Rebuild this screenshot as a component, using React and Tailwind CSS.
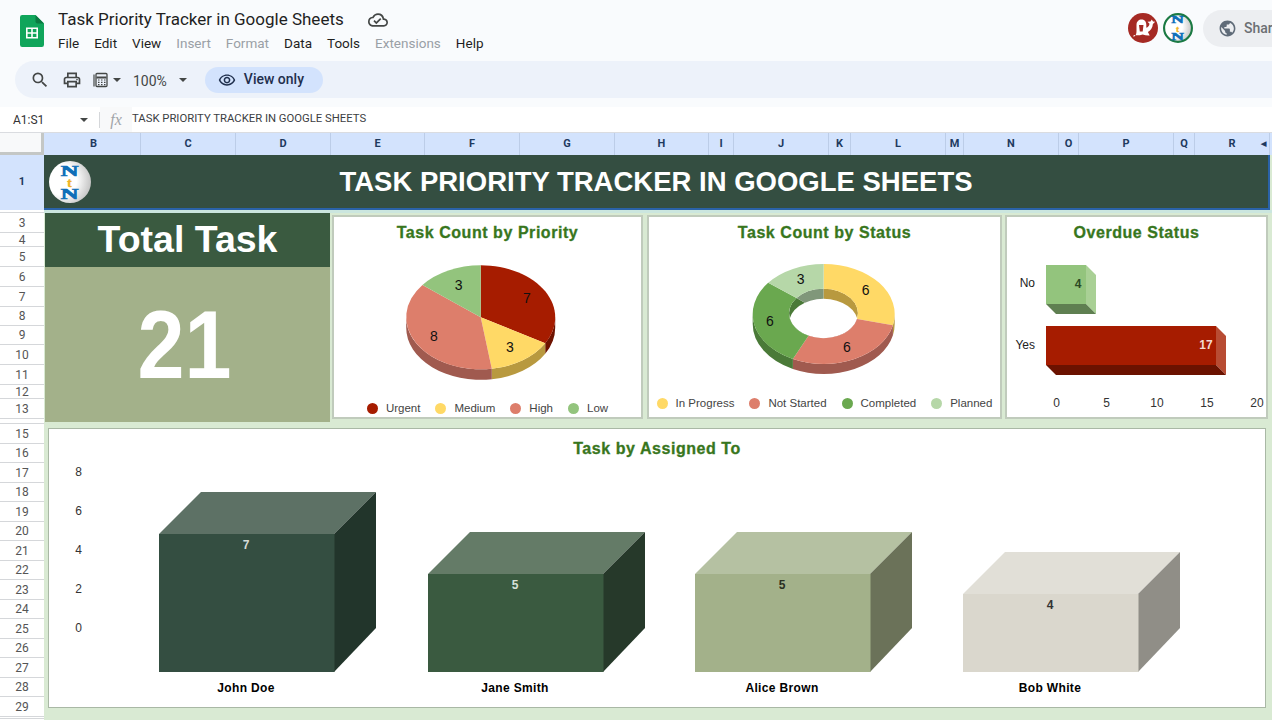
import React from 'react';
import { MdPublic, MdOutlineCloudDone, MdSearch, MdOutlinePrint, MdOutlineRemoveRedEye } from 'react-icons/md';

const COLS = ['', 'B', 'C', 'D', 'E', 'F', 'G', 'H', 'I', 'J', 'K', 'L', 'M', 'N', 'O', 'P', 'Q', 'R'];
const ROWS = ['1', '', '3', '4', '5', '6', '7', '8', '9', '10', '11', '12', '13', '', '15', '16', '17', '18', '19', '20', '21', '22', '23', '24', '25', '26', '27', '28', '29', ''];
const MENU = [['File', 0], ['Edit', 0], ['View', 0], ['Insert', 1], ['Format', 1], ['Data', 0], ['Tools', 0], ['Extensions', 1], ['Help', 0]];

const pt = (c, deg, dy = 0) => {
  const t = (deg * Math.PI) / 180;
  return [c.x + c.rx * Math.sin(t), c.y - c.ry * Math.cos(t) + dy];
};
const sector = (c, a, b) => {
  const p = pt(c, a), q = pt(c, b);
  return `M${c.x} ${c.y}L${p}A${c.rx} ${c.ry} 0 ${b - a > 180 ? 1 : 0} 1 ${q}Z`;
};
const wall = (c, a, b, d) => {
  const s = Math.max(a, 90), e = Math.min(b, 270);
  if (e <= s) return '';
  return `M${pt(c, s)}A${c.rx} ${c.ry} 0 0 1 ${pt(c, e)}L${pt(c, e, d)}A${c.rx} ${c.ry} 0 0 0 ${pt(c, s, d)}Z`;
};
const ring = (o, i, a, b) => {
  const l = b - a > 180 ? 1 : 0;
  return `M${pt(o, a)}A${o.rx} ${o.ry} 0 ${l} 1 ${pt(o, b)}L${pt(i, b)}A${i.rx} ${i.ry} 0 ${l} 0 ${pt(i, a)}Z`;
};

function NtnLogo({ className, ring: withRing }) {
  const id = withRing ? 'lgA' : 'lgB';
  return (
    <svg viewBox="0 0 42 42" className={className}>
      <defs>
        <radialGradient id={id} cx="0.3" cy="0.45" r="0.8">
          <stop offset="0.45" stopColor="#ffffff" />
          <stop offset="1" stopColor="#b4b4b4" />
        </radialGradient>
      </defs>
      <circle cx="21" cy="21" r={withRing ? 19.5 : 21} fill={`url(#${id})`} stroke={withRing ? '#1b7a43' : 'none'} strokeWidth={withRing ? 3 : 0} />
      <g fontFamily="'Liberation Serif',serif" fontWeight="700" textAnchor="middle">
        <text transform="translate(20.5 14.5) scale(1.75 1)" fontSize="14" fill="#0f6fb8" stroke="#0f6fb8" strokeWidth="0.7">N</text>
        <text x="20.5" y="26" fontSize="13" fill="#f0b323" stroke="#f0b323" strokeWidth="0.5">t</text>
        <text transform="translate(20.5 38) scale(1.75 1)" fontSize="14" fill="#0f6fb8" stroke="#0f6fb8" strokeWidth="0.7">N</text>
      </g>
    </svg>
  );
}

function SheetsIcon() {
  return (
    <svg viewBox="0 0 24 32" className="w-[24px] h-[32px] shrink-0">
      <path d="M2.2 0H15.5L24 8.5V29.8A2.2 2.2 0 0 1 21.8 32H2.2A2.2 2.2 0 0 1 0 29.8V2.2A2.2 2.2 0 0 1 2.2 0Z" fill="#10a55b" />
      <path d="M15.5 0L24 8.5H17.5A2 2 0 0 1 15.5 6.5Z" fill="#0b7a42" />
      <path d="M6 12.5H18V23.5H6ZM7.6 14.1V17.2H11.2V14.1ZM12.8 14.1V17.2H16.4V14.1ZM7.6 18.8V21.9H11.2V18.8ZM12.8 18.8V21.9H16.4V18.8Z" fill="#fff" fillRule="evenodd" />
    </svg>
  );
}

function Caret({ className = '' }) {
  return <svg viewBox="0 0 8 4" className={`w-[8px] h-[4px] shrink-0 ${className}`}><path d="M0 0H8L4 4Z" fill="#444746" /></svg>;
}

function Legend({ items, className }) {
  return (
    <div className={`flex justify-center gap-[15px] text-[11.5px] leading-none text-[#444] ${className}`}>
      {items.map(([name, color]) => (
        <div key={name} className="flex items-center gap-[8px]">
          <svg viewBox="0 0 11 11" className="w-[11px] h-[11px]"><circle cx="5.5" cy="5.5" r="5.5" fill={color} /></svg>
          <span>{name}</span>
        </div>
      ))}
    </div>
  );
}

function PieChart() {
  const c = { x: 480.7, y: 317.3, rx: 74.5, ry: 52 };
  const slices = [[0, 120, '#a61c00', '#6e1300'], [120, 171.43, '#ffd966', '#b8993f'], [171.43, 308.57, '#dd7e6b', '#a05a4f'], [308.57, 360, '#93c47d', '#6a8f5a']];
  const labels = [[527, 298, '7'], [510, 347, '3'], [434, 336, '8'], [458.7, 285, '3']];
  return (
    <svg viewBox="334 249 307 146" className="w-[307px] h-[146px]">
      {slices.map(([a, b, , d]) => <path key={a} d={wall(c, a, b, 10.5)} fill={d} />)}
      {slices.map(([a, b, f]) => <path key={a} d={sector(c, a, b)} fill={f} />)}
      {labels.map(([x, y, t], i) => <text key={i} x={x} y={y + 5} fontSize="14" textAnchor="middle" fill="#111">{t}</text>)}
    </svg>
  );
}

function DonutChart() {
  const o = { x: 823.7, y: 314, rx: 71, ry: 50 };
  const i = { x: 823.5, y: 313.5, rx: 34.5, ry: 24.7 };
  const slices = [[0, 102.86, '#ffd966', '#b8993f'], [102.86, 205.71, '#dd7e6b', '#a05a4f'], [205.71, 308.57, '#6aa84f', '#4a7a38'], [308.57, 360, '#b6d7a8', '#80977a']];
  const labels = [[865.7, 290, '6'], [847, 347, '6'], [770, 321, '6'], [800.7, 279, '3']];
  return (
    <svg viewBox="649 249 351 135" className="w-[351px] h-[135px]">
      <defs>
        <clipPath id="holeClip"><ellipse cx={i.x} cy={i.y} rx={i.rx} ry={i.ry} /></clipPath>
      </defs>
      {slices.map(([a, b, , d]) => <path key={a} d={wall(o, a, b, 10)} fill={d} />)}
      {slices.map(([a, b, , d]) => <path key={a} d={sector(i, a, b)} fill={d} />)}
      <ellipse cx={i.x} cy={i.y + 10} rx={i.rx} ry={i.ry} fill="#fff" clipPath="url(#holeClip)" />
      {slices.map(([a, b, f]) => <path key={a} d={ring(o, i, a, b)} fill={f} />)}
      {labels.map(([x, y, t], n) => <text key={n} x={x} y={y + 5} fontSize="14" textAnchor="middle" fill="#111">{t}</text>)}
    </svg>
  );
}

function OverdueChart() {
  const bars = [
    { x: 1046, w: 40, y: 265, h: 39, f: '#93c47d', s: '#a9d095', b: '#5f7f51' },
    { x: 1046, w: 170, y: 326, h: 39, f: '#a61c00', s: '#b84c33', b: '#6b1200' },
  ];
  return (
    <svg viewBox="1007 249 259 168" className="w-[259px] h-[168px]">
      {bars.map((r) => (
        <g key={r.y}>
          <path d={`M${r.x + r.w} ${r.y}l10 10v${r.h}l-10 -10Z`} fill={r.s} />
          <path d={`M${r.x} ${r.y + r.h}h${r.w}l10 10h-${r.w}Z`} fill={r.b} />
          <rect x={r.x} y={r.y} width={r.w} height={r.h} fill={r.f} />
        </g>
      ))}
      <g fontSize="12" fill="#222">
        <text x="1035" y="287" textAnchor="end">No</text>
        <text x="1035" y="349" textAnchor="end">Yes</text>
      </g>
      <text x="1078" y="288" fontSize="12" textAnchor="middle" fontWeight="700" fill="#2c4a25">4</text>
      <text x="1206" y="349" fontSize="12" textAnchor="middle" fontWeight="700" fill="#f3d9d2">17</text>
      <g fontSize="12" fill="#333" textAnchor="middle">
        {[[1056.7, '0'], [1106.5, '5'], [1157, '10'], [1207, '15'], [1257, '20']].map(([x, t]) => <text key={t} x={x} y="407">{t}</text>)}
      </g>
    </svg>
  );
}

function BarsChart() {
  const bars = [
    { name: 'John Doe', v: '7', x: 159, y: 534, f: '#344e41', t: '#5d7165', s: '#22352b', l: '#d5dcd8' },
    { name: 'Jane Smith', v: '5', x: 428, y: 574, f: '#3a5a40', t: '#647b67', s: '#26392a', l: '#d8e0d9' },
    { name: 'Alice Brown', v: '5', x: 695, y: 574, f: '#a3b18a', t: '#b5c1a2', s: '#6b7259', l: '#2a2f22' },
    { name: 'Bob White', v: '4', x: 963, y: 594, f: '#dad7cd', t: '#e1dfd7', s: '#908e87', l: '#333' },
  ];
  return (
    <svg viewBox="49 465 1216 242" className="w-[1216px] h-[242px]">
      <g fontSize="12" fill="#333" textAnchor="middle">
        {[[472, '8'], [511, '6'], [550, '4'], [589, '2'], [628, '0']].map(([y, t]) => <text key={t} x="78.5" y={y + 4}>{t}</text>)}
      </g>
      {bars.map((b) => (
        <g key={b.name}>
          <path d={`M${b.x} ${b.y}l42 -42h175l-42 42Z`} fill={b.t} />
          <path d={`M${b.x + 175} ${b.y}l42 -42V628L${b.x + 175} 672Z`} fill={b.s} />
          <rect x={b.x} y={b.y} width="175.5" height={672 - b.y} fill={b.f} />
          <text x={b.x + 87} y={b.y + 15} fontSize="12" fontWeight="700" textAnchor="middle" fill={b.l}>{b.v}</text>
          <text x={b.x + 87} y="692" fontSize="12" fontWeight="700" letterSpacing="0.35" textAnchor="middle" fill="#000">{b.name}</text>
        </g>
      ))}
    </svg>
  );
}

function Title({ children, className = '' }) {
  return <div className={`flex items-center justify-center text-[16px] font-bold tracking-[0.55px] text-[#38761d] [-webkit-text-stroke:0.3px_#38761d] ${className}`}>{children}</div>;
}

export default function App() {
  return (
    <div className="w-[1272px] h-[720px] overflow-hidden flex flex-col bg-[#f9fbfd] font-['Liberation_Sans',sans-serif]">
      {/* Title bar */}
      <div className="h-[61px] shrink-0 flex font-['Roboto',sans-serif]">
        <div className="w-[1128px] shrink-0 flex pl-[20px] pt-[15px] gap-[14px]">
          <SheetsIcon />
          <div className="flex flex-col -mt-[7px]">
            <div className="flex items-center h-[24px] gap-[24px]">
              <span className="text-[17px] text-[#1f1f1f]">Task Priority Tracker in Google Sheets</span>
              <MdOutlineCloudDone size={20} color="#444746" />
            </div>
            <div className="flex gap-[15px] text-[13.5px] leading-none mt-[5px]">
              {MENU.map(([m, off]) => (
                <span key={m} className={off ? 'text-[#9aa0a6]' : 'text-[#1f1f1f]'}>{m}</span>
              ))}
            </div>
          </div>
        </div>
        <div className="flex items-start pt-[10px] gap-[10px] shrink-0">
          <div className="flex items-center gap-[5px] pt-[3px]">
            <svg viewBox="0 0 30 30" className="w-[30px] h-[30px] shrink-0">
              <circle cx="15" cy="15" r="15" fill="#a52a24" />
              <path d="M5.5 24c2.2-1.2 3-3 3-5.5V12c0-3.6 2.4-5.500 5-5.500s4.800 1.900 4.800 5.200v3c1.800-.6 3-2 3.200-4l-2-2 3-.3 1.300-2 1.200 2 2.200.4-2.300 2.200c-.3 4-2.500 6.800-5 8l1.800 3.500c-2.500.2-5-.2-7-1-3 .9-6 1.100-9 .5Z" fill="#fff" />
              <path d="M11 12h4.500l-.8 6.500h-2.900Z" fill="#a52a24" />
            </svg>
            <NtnLogo ring className="w-[30px] h-[30px] shrink-0" />
          </div>
          <div className="w-[90px] h-[37px] shrink-0 rounded-l-full bg-[#eceef1] flex items-center pl-[15px] gap-[7px]">
            <MdPublic size={19} color="#5f6b78" />
            <span className="text-[14px] font-medium text-[#6b6f73]">Share</span>
          </div>
        </div>
      </div>

      {/* Toolbar */}
      <div className="h-[37px] shrink-0 ml-[15px] rounded-l-full bg-[#edf2fa] flex items-center pl-[15px] font-['Roboto',sans-serif]">
        <MdSearch size={20} color="#444746" />
        <MdOutlinePrint size={20} color="#444746" className="ml-[12px]" />
        <svg viewBox="0 0 16 16" className="w-[16px] h-[16px] ml-[10px]" fill="none" stroke="#444746" strokeWidth="1.3">
          <path d="M2 14.5V2.500" strokeWidth="1.200" />
          <rect x="4" y="1.500" width="11" height="13" rx="1" />
          <path d="M4.500 5.500H14.500" strokeWidth="2" />
          <path d="M6 8h1.500M9 8h1.500M12 8h1.500M6 10.400h1.500M9 10.400h1.500M12 10.400h1.500M6 12.700h1.500M9 12.700h1.500M12 12.700h1.500" strokeWidth="1.200" />
        </svg>
        <Caret className="ml-[5px]" />
        <span className="ml-[12px] text-[14px] leading-none pt-[2px] text-[#444746]">100%</span>
        <Caret className="ml-[12px]" />
        <div className="ml-[18px] w-[118px] h-[26px] rounded-full bg-[#d3e3fd] flex items-center pl-[13px] gap-[8px]">
          <MdOutlineRemoveRedEye size={18} color="#1f2f4d" />
          <span className="text-[14px] font-medium text-[#1f2f4d]">View only</span>
        </div>
      </div>

      {/* Formula bar */}
      <div className="h-[26px] mt-[9px] shrink-0 flex items-center bg-white border-b border-[#dadce0] font-['Roboto',sans-serif] text-[12px] text-[#333]">
        <span className="w-[80px] pl-[13px]">A1:S1</span>
        <Caret />
        <div className="ml-[11px] w-px h-[16px] bg-[#d5d7da]" />
        <div className="w-[32px] h-full bg-[#f8f9fa] flex items-center justify-center">
          <span className="font-['Liberation_Serif',serif] italic text-[16px] text-[#a0a4a8]">fx</span>
        </div>
        <span className="text-[11.3px] text-[#3c4043]">TASK PRIORITY TRACKER IN GOOGLE SHEETS</span>
      </div>

      {/* Column headers */}
      <div className="h-[22px] shrink-0 grid grid-cols-[44px_97px_95px_95px_94px_95px_95px_94px_25px_95px_22px_95px_18px_95px_20px_95px_21px_75px_2px] font-['Roboto',sans-serif] text-[11px] font-bold text-[#1e3a5f]">
        {COLS.map((c, i) =>
          i === 0 ? (
            <div key="corner" className="bg-[#f8f9fa] border-r-[3px] border-b-[3px] border-[#c4c7c5]" />
          ) : (
            <div key={c} className={`relative bg-[#d3e3fd] border-r border-[#bccde8] flex items-center justify-center ${c === 'B' ? 'pl-[3px]' : ''}`}>
              {c}
              {c === 'R' && <span className="absolute right-[3px] text-[7px] text-[#1e3a5f]">◀</span>}
            </div>
          )
        )}
        <div className="bg-[#d3e3fd]" />
      </div>

      {/* Grid body */}
      <div className="flex-1 min-h-0 flex">
        <div className="w-[44px] shrink-0 bg-white grid grid-rows-[55px_3px_20px_14px_20px_20px_20px_19px_19px_20px_20px_14px_20px_5px_20px_19px_20px_19px_20px_19px_20px_19px_20px_19px_20px_19px_20px_19px_20px_2px] font-['Roboto',sans-serif] text-[12px] text-[#555]">
          {ROWS.map((r, i) =>
            i === 0 ? (
              <div key={i} className="bg-[#d3e3fd] flex items-center justify-center text-[11px] font-bold text-[#1e3a5f]">{r}</div>
            ) : (
              <div key={i} className="border-b border-[#d5d7da] flex items-center justify-center leading-none overflow-hidden">{r}</div>
            )
          )}
        </div>

        <div className="w-[1228px] shrink-0 bg-[#d9ead3] flex flex-col">
          <div className="h-[55px] shrink-0 w-[1226px] relative bg-[#344e41] border-b-2 border-r-2 border-[#2a62a8] flex items-center justify-center">
            <NtnLogo className="absolute left-[5px] top-[6px] w-[42px] h-[42px]" />
            <h1 className="text-[27.5px] leading-none font-bold text-white">TASK PRIORITY TRACKER IN GOOGLE SHEETS</h1>
          </div>
          <div className="h-[3px] shrink-0 bg-[#cbe6df]" />

          <div className="h-[209px] shrink-0 flex items-start pl-px">
            <div className="w-[285px] h-[209px] shrink-0 flex flex-col text-white font-bold">
              <div className="h-[54px] bg-[#3a5a40] flex items-center justify-center text-[37.5px] leading-none">Total Task</div>
              <div className="flex-1 bg-[#a3b18a] flex items-center justify-center text-[96px] leading-none pr-[7px]">
                <span className="inline-block scale-x-[0.88]">21</span>
              </div>
            </div>

            <div className="ml-[2px] mt-[2px] w-[311px] h-[204px] shrink-0 bg-white border-2 border-[#c0cbbc] flex flex-col">
              <Title className="h-[32px] shrink-0">Task Count by Priority</Title>
              <PieChart />
              <Legend className="mt-[8px]" items={[['Urgent', '#a61c00'], ['Medium', '#ffd966'], ['High', '#dd7e6b'], ['Low', '#93c47d']]} />
            </div>

            <div className="ml-[4px] mt-[2px] w-[355px] h-[204px] shrink-0 bg-white border-2 border-[#c0cbbc] flex flex-col">
              <Title className="h-[32px] shrink-0">Task Count by Status</Title>
              <DonutChart />
              <Legend className="mt-[14px]" items={[['In Progress', '#ffd966'], ['Not Started', '#dd7e6b'], ['Completed', '#6aa84f'], ['Planned', '#b6d7a8']]} />
            </div>

            <div className="ml-[3px] mt-[2px] w-[263px] h-[204px] shrink-0 bg-white border-2 border-[#c0cbbc] flex flex-col">
              <Title className="h-[32px] shrink-0">Overdue Status</Title>
              <OverdueChart />
            </div>
          </div>

          <div className="ml-[4px] mt-[6px] w-[1218px] h-[280px] shrink-0 bg-white border border-[#a9b8a5] flex flex-col">
            <Title className="h-[36px] shrink-0 pt-[4px]">Task by Assigned To</Title>
            <BarsChart />
          </div>
        </div>
      </div>
    </div>
  );
}
